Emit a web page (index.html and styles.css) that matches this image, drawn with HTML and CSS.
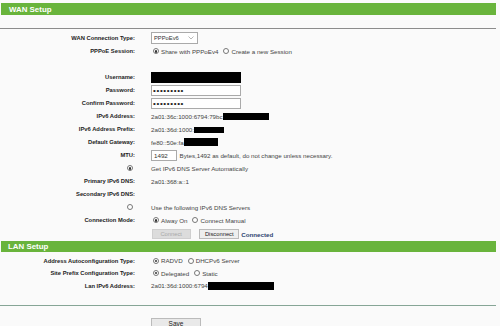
FILE: index.html
```html
<!DOCTYPE html>
<html>
<head>
<meta charset="utf-8">
<link rel="stylesheet" href="styles.css">
</head>
<body>
<div class="page">
  <div class="bar">WAN Setup</div>
  <div class="sep"></div>
  <div class="rows wan">
    <div class="row"><span class="lbl">WAN Connection Type:</span><span class="val"><span class="select">PPPoEv6<svg class="chev" width="6" height="4" viewBox="0 0 6 4"><path d="M0.5 0.5 L3 3 L5.5 0.5" fill="none" stroke="#999" stroke-width="0.7"/></svg></span></span></div>
    <div class="row"><span class="lbl">PPPoE Session:</span><span class="val"><span class="radio on"></span><span class="otxt">Share with PPPoEv4</span><span class="radio"></span><span class="otxt">Create a new Session</span></span></div>
    <div class="row"><span class="lbl"></span><span class="val"></span></div>
    <div class="row"><span class="lbl">Username:</span><span class="val"><span class="box black"></span></span></div>
    <div class="row"><span class="lbl">Password:</span><span class="val"><span class="box pw">•••••••••</span></span></div>
    <div class="row"><span class="lbl">Confirm Password:</span><span class="val"><span class="box pw">•••••••••</span></span></div>
    <div class="row"><span class="lbl">IPv6 Address:</span><span class="val">2a01:36c:1000:6794:79bc<span class="redact r1"></span></span></div>
    <div class="row"><span class="lbl">IPv6 Address Prefix:</span><span class="val">2a01:36d:1000:<span class="redact r2"></span></span></div>
    <div class="row"><span class="lbl">Default Gateway:</span><span class="val">fe80::50e:fa<span class="redact r3"></span></span></div>
    <div class="row"><span class="lbl">MTU:</span><span class="val"><span class="mtu">1492</span><span class="hint">Bytes,1492 as default, do not change unless necessary.</span></span></div>
    <div class="row"><span class="lbl"><span class="radio on"></span></span><span class="val">Get IPv6 DNS Server Automatically</span></div>
    <div class="row"><span class="lbl">Primary IPv6 DNS:</span><span class="val">2a01:368:a::1</span></div>
    <div class="row"><span class="lbl">Secondary IPv6 DNS:</span><span class="val"></span></div>
    <div class="row"><span class="lbl"><span class="radio"></span></span><span class="val">Use the following IPv6 DNS Servers</span></div>
    <div class="row"><span class="lbl">Connection Mode:</span><span class="val"><span class="radio on"></span><span class="otxt">Alway On</span><span class="radio"></span><span class="otxt">Connect Manual</span></span></div>
  </div>
  <div class="btnrow">
    <span class="btn disabled">Connect</span>
    <span class="btn disc">Disconnect</span>
    <span class="status">Connected</span>
  </div>
  <div class="bar lan">LAN Setup</div>
  <div class="rows lanrows">
    <div class="row"><span class="lbl">Address Autoconfiguration Type:</span><span class="val"><span class="radio on"></span><span class="otxt">RADVD</span><span class="radio"></span><span class="otxt">DHCPv6 Server</span></span></div>
    <div class="row"><span class="lbl">Site Prefix Configuration Type:</span><span class="val"><span class="radio on"></span><span class="otxt">Delegated</span><span class="radio"></span><span class="otxt">Static</span></span></div>
    <div class="row"><span class="lbl">Lan IPv6 Address:</span><span class="val">2a01:36d:1000:6794<span class="redact r4"></span></span></div>
  </div>
  <div class="sep bottom"></div>
  <div class="saverow"><span class="btn save">Save</span></div>
</div>
</body>
</html>
```

FILE: styles.css
```css
html, body {
  margin: 0;
  padding: 0;
  background: #fafafa;
}
body {
  width: 500px;
  height: 326px;
  overflow: hidden;
  font-family: "Liberation Sans", Arial, sans-serif;
  color: #333;
}
.page {
  padding-top: 3px;
}
.bar {
  height: 12px;
  margin: 0 4px 0 1px;
  background: #69b43c;
  color: #fff;
  font-weight: bold;
  font-size: 7.9px;
  display: flex;
  align-items: center;
  padding-left: 8px;
}
.bar.lan {
  height: 11px;
  padding-left: 7px;
}
.sep {
  margin-top: 13px;
  margin-right: 4px;
  border-top: 1px solid #8c8c8c;
}
.sep.bottom {
  border-top-color: #86a596;
}
.rows.wan {
  padding-top: 2.8px;
}
.rows.lanrows {
  padding-top: 2.15px;
}
.row {
  display: grid;
  grid-template-columns: 135px 1fr;
  column-gap: 16px;
  height: 13px;
  align-items: center;
}
.lanrows .row {
  height: 12.5px;
}
.lbl {
  text-align: right;
  font-weight: bold;
  font-size: 5.8px;
  color: #222;
  display: flex;
  justify-content: flex-end;
  align-items: center;
  white-space: nowrap;
}
.lbl .radio {
  margin-right: 2px;
}
.val {
  font-size: 6.2px;
  color: #444;
  display: flex;
  align-items: center;
  white-space: nowrap;
}
.select {
  box-sizing: border-box;
  width: 47px;
  height: 12px;
  border: 1px solid #aaa;
  background: #fff;
  display: flex;
  align-items: center;
  justify-content: space-between;
  padding: 0 3px 0 2px;
  color: #333;
  font-size: 5.8px;
}
.radio {
  box-sizing: border-box;
  width: 6px;
  height: 6px;
  border-radius: 50%;
  border: 0.8px solid #777;
  background: #fff;
  display: inline-block;
  position: relative;
  flex: none;
  margin-left: 2px;
}
.radio.on::after {
  content: "";
  position: absolute;
  left: 1.1px;
  top: 1.1px;
  width: 2.2px;
  height: 2.2px;
  border-radius: 50%;
  background: #333;
}
.otxt {
  margin-left: 2px;
  margin-right: 3px;
}
.box {
  box-sizing: border-box;
  width: 90px;
  height: 11px;
  display: flex;
  align-items: center;
}
.box.black {
  background: #000;
}
.box.pw {
  height: 10.5px;
  background: #fff;
  border: 1px solid #aaa;
  font-size: 8px;
  letter-spacing: 0.65px;
  color: #222;
  padding-left: 1px;
}
.redact {
  display: inline-block;
  background: #000;
}
.r1 { width: 46px; height: 7.5px; }
.r2 { width: 30px; height: 5.5px; margin-top: 1.5px; }
.r3 { width: 34px; height: 7.7px; }
.r4 { width: 66px; height: 8px; }
.mtu {
  box-sizing: border-box;
  width: 26px;
  height: 11px;
  border: 1px solid #aaa;
  background: #fff;
  display: flex;
  align-items: flex-end;
  padding: 0 0 1px 2px;
  color: #333;
}
.hint {
  margin-left: 2.5px;
}
.btnrow {
  height: 14.5px;
  display: flex;
  align-items: center;
  padding-left: 151.7px;
}
.btn {
  box-sizing: border-box;
  height: 10.6px;
  display: inline-flex;
  align-items: center;
  justify-content: center;
  font-size: 5.8px;
  border: 1px solid #bbb;
  background: #eee;
  color: #222;
}
.btn.disabled {
  width: 39px;
  background: #dcdcdc;
  border-color: #cfcfcf;
  color: #a8a8a8;
}
.btn.disc {
  width: 40px;
  margin-left: 8.6px;
}
.status {
  margin-left: 2px;
  font-size: 6.2px;
  font-weight: bold;
  color: #2c4470;
}
.saverow {
  padding-top: 5.7px;
  padding-left: 151px;
}
.btn.save {
  width: 50px;
  height: 9.6px;
  font-size: 6.5px;
  background: #e9e9e9;
}
```
